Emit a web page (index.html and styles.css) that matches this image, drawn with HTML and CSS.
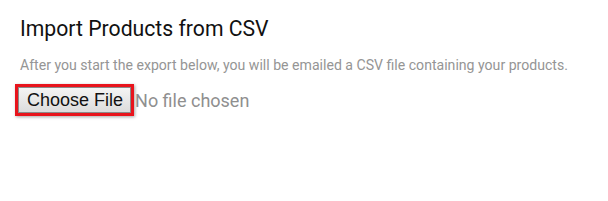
FILE: index.html
```html
<!DOCTYPE html>
<html>
<head>
<meta charset="utf-8">
<link rel="stylesheet" href="styles.css">
</head>
<body>
<div class="panel">
  <h1 class="title">Import Products from CSV</h1>
  <p class="desc">After you start the export below, you will be emailed a CSV file containing your products.</p>
  <div class="file-row">
    <span class="highlight"><span class="btn">Choose File</span></span>
    <span class="status">No file chosen</span>
  </div>
</div>
</body>
</html>
```
FILE: styles.css
```css
html, body { margin: 0; padding: 0; background: #fff; }
body { width: 608px; height: 201px; overflow: hidden; font-family: Roboto, "Liberation Sans", sans-serif; }
.panel { padding: 15px 0 0 20px; }
.title { margin: 0; font-weight: 400; font-size: 21.2px; line-height: 28px; color: #111; }
.desc { margin: 13px 0 0; font-size: 14.1px; line-height: 18px; color: #959595; }
.file-row { display: flex; align-items: center; margin-top: 10px; margin-left: -5px; }
.highlight { display: inline-flex; border: 3px solid #e8141c; box-shadow: 1px 1px 3px rgba(0,0,0,0.35); }
.btn { font-family: "Liberation Sans", Arial, sans-serif; font-size: 18px; line-height: 22px; color: #111;
  padding: 1px 7px 1px 8px; border: 1px solid #8a8a8a; background: linear-gradient(#f4f4f4, #dcdcdc); }
.status { font-size: 18px; color: #8f8f8f; margin-left: 1px; }
```
